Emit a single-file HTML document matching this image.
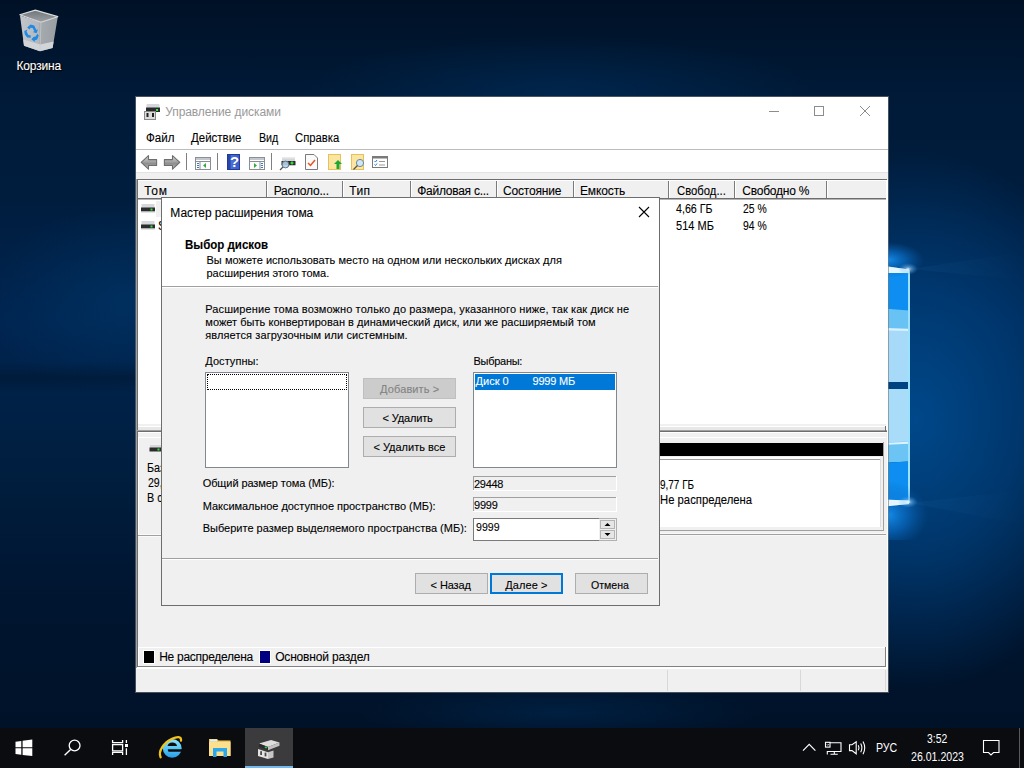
<!DOCTYPE html>
<html><head><meta charset="utf-8"><style>
html,body{margin:0;padding:0;width:1024px;height:768px;overflow:hidden;position:relative;font-family:"Liberation Sans", sans-serif;}
.t{position:absolute;line-height:20px;white-space:pre;-webkit-text-stroke:0.1px currentColor;}
</style></head><body>
<div style="position:absolute;left:0px;top:0px;width:1024px;height:768px;background:linear-gradient(180deg,#001126 0%,#001a38 12.6%,#001d3e 26%,#002450 42%,#001f40 60%,#001530 78%,#001228 95%)"></div>
<div style="position:absolute;left:0px;top:0px;width:1024px;height:768px;background:radial-gradient(ellipse 210px 270px at 915px 420px,rgba(0,72,138,1),rgba(0,60,118,0.8) 50%,rgba(0,50,100,0) 100%)"></div>
<div style="position:absolute;left:0px;top:0px;width:1024px;height:768px;background:radial-gradient(ellipse 150px 95px at 130px 300px,rgba(0,54,104,0.65),rgba(0,54,104,0) 100%)"></div>
<div style="position:absolute;left:0px;top:362px;width:136px;height:32px;background:linear-gradient(180deg,rgba(0,14,30,0) 0%,rgba(0,14,30,0.35) 50%,rgba(0,14,30,0) 100%)"></div>
<div style="position:absolute;left:0px;top:0px;width:1024px;height:768px;background:radial-gradient(ellipse 260px 60px at 560px 95px,rgba(0,48,95,0.55),rgba(0,48,95,0) 100%)"></div>
<div style="position:absolute;left:0px;top:0px;width:1024px;height:768px;background:radial-gradient(ellipse 200px 30px at 560px 712px,rgba(0,42,85,0.55),rgba(0,42,85,0) 100%)"></div>
<svg style="position:absolute;left:870px;top:240px" width="154" height="300">
<defs>
<radialGradient id="fl1" cx="0.5" cy="0.5" r="0.5"><stop offset="0" stop-color="#f4fcff" stop-opacity="0.95"/><stop offset="0.3" stop-color="#a8dcff" stop-opacity="0.5"/><stop offset="1" stop-color="#3aa0f0" stop-opacity="0"/></radialGradient>
<radialGradient id="bg1" cx="0.5" cy="0.5" r="0.5"><stop offset="0" stop-color="#1590f0" stop-opacity="0.95"/><stop offset="0.5" stop-color="#0a78d8" stop-opacity="0.55"/><stop offset="1" stop-color="#0a60b0" stop-opacity="0"/></radialGradient>
<linearGradient id="rayg" x1="0" x2="1"><stop offset="0" stop-color="#5ab4f4" stop-opacity="0.45"/><stop offset="1" stop-color="#5ab4f4" stop-opacity="0"/></linearGradient>
</defs>
<path d="M0 26 L39 31 L39 142 L0 142 Z" fill="#0d8ef0"/>
<path d="M0 67.5 L39 70.5 L39 89 L0 88 Z" fill="#68c2f4"/>
<path d="M0 88 L39 89 L39 142 L0 142 Z" fill="#a6daf8"/>
<path d="M0 87.5 L39 88.8 L39 91 L0 90 Z" fill="#d8f2ff"/>
<path d="M0 149 L39 149 L39 202 L0 204 Z" fill="#a8dcf8"/>
<path d="M0 203 L39 201.5 L39 221.5 L0 223.5 Z" fill="#6cc4f5"/>
<path d="M0 203.5 L39 201.8 L39 203.8 L0 205.5 Z" fill="#dcf4ff"/>
<path d="M0 223.5 L39 221.5 L39 262 L0 266 Z" fill="#0d8ef0"/>
<path d="M0 24 L39 29.5 L39 33 L0 33 Z" fill="#e4f6ff"/>
<path d="M0 259 L39 260.5 L39 264 L0 268 Z" fill="#e4f6ff"/>
<rect x="38" y="30" width="2" height="233" fill="#9be2ff"/>
<ellipse cx="18" cy="20" rx="36" ry="18" fill="url(#bg1)"/>
<ellipse cx="18" cy="275" rx="40" ry="34" fill="url(#bg1)"/>
<path d="M0 24 L39 29.5 L39 33 L0 33 Z" fill="#e4f6ff"/>
<path d="M0 259 L39 260.5 L39 264 L0 268 Z" fill="#e4f6ff"/>
<ellipse cx="38" cy="29" rx="10" ry="6" fill="url(#fl1)"/>
<ellipse cx="38" cy="262" rx="10" ry="6" fill="url(#fl1)"/>
<path d="M40 29 L154 12 L154 40 Z" fill="url(#rayg)" opacity="0.12"/>
<path d="M40 263 L154 250 L154 285 Z" fill="url(#rayg)" opacity="0.12"/>
</svg>
<svg style="position:absolute;left:0;top:0" width="80" height="60">
<defs><linearGradient id="rb" x1="0" x2="1"><stop offset="0" stop-color="#c2c6ca"/><stop offset="0.5" stop-color="#b4b8bc"/><stop offset="0.52" stop-color="#a6abb0"/><stop offset="1" stop-color="#989da2"/></linearGradient>
<linearGradient id="rt" x1="0" y1="0" x2="0" y2="1"><stop offset="0" stop-color="#70757a"/><stop offset="1" stop-color="#9ca1a6"/></linearGradient></defs>
<path d="M20 15.5 L24 45.7 L40 51.3 L52.6 48 L57.8 16.8 L40.9 22.3 Z" fill="url(#rb)"/>
<path d="M23.2 39.5 L40.2 44.5 L53.6 41.5 L52.6 48 L40 51.3 L24 45.7 Z" fill="#d2d5d8"/>
<path d="M19.8 14.8 L35.3 10.1 L57.8 16.65 L40.9 22.3 Z" fill="url(#rt)" stroke="#dadcde" stroke-width="1.1" stroke-linejoin="round"/>
<path d="M40.9 22.8 L40 51" stroke="#c8cbce" stroke-width="0.7"/>
<g fill="#1f8ae6">
<path d="M27.2 27.5 L30.5 24.6 L34.2 25.4 L36.4 30 L38 29.2 L36.6 33.2 L32.8 32 L34.4 31.3 L32.6 28 L30.6 27.8 L29.5 29.5 Z"/>
<path d="M24.2 31 L27.6 29.4 L26.6 31.4 L28.4 35 L30.6 35.2 L30.8 37.8 L27.2 37.6 L24.8 34.6 Z"/>
<path d="M32 37.2 L35.6 36.4 L37.4 33.8 L38.8 35.6 L37.2 39.4 L34.6 40.6 L34.8 42 L31.4 39.2 L33.6 37 Z"/>
</g>
</svg>
<span class="t" style="left:16.50px;top:56px;font-size:12px;color:#fff;letter-spacing:-0.173px;text-shadow:0 0 2px #000,1px 1px 1px #000;">Корзина</span>
<div style="position:absolute;left:136px;top:97px;width:752px;height:595px;background:#fff;box-shadow:0 0 0 1px rgba(120,120,120,0.6)"></div>
<svg style="position:absolute;left:143px;top:102px" width="20" height="20">
<rect x="3.5" y="2" width="13" height="4" rx="1" fill="#d4d6d9"/><rect x="3" y="5.5" width="14" height="4.5" fill="#2a2a2a"/><rect x="13" y="7" width="2" height="2" fill="#37e03a"/>
<rect x="1.5" y="9.5" width="11" height="8" fill="#dcdcdc" stroke="#8a8a8a"/><rect x="3.5" y="11" width="2" height="4" fill="#222"/><rect x="9" y="11" width="2" height="4" fill="#222"/>
</svg>
<span class="t" style="left:165.20px;top:102px;font-size:12px;color:#999;letter-spacing:-0.070px;-webkit-text-stroke:0;">Управление дисками</span>
<div style="position:absolute;left:769px;top:111px;width:10px;height:1px;background:#8c8c8c"></div>
<div style="position:absolute;left:814px;top:106px;width:10px;height:10px;border:1px solid #8c8c8c;box-sizing:border-box"></div>
<svg style="position:absolute;left:859px;top:105px" width="12" height="12"><path d="M1 1 L11 11 M11 1 L1 11" stroke="#8c8c8c" stroke-width="1"/></svg>
<span class="t" style="left:146.30px;top:128px;font-size:12px;color:#000;transform:scaleX(0.9627);transform-origin:0 0;">Файл</span>
<span class="t" style="left:191.30px;top:128px;font-size:12px;color:#000;transform:scaleX(0.9571);transform-origin:0 0;">Действие</span>
<span class="t" style="left:258.80px;top:128px;font-size:12px;color:#000;transform:scaleX(0.8891);transform-origin:0 0;">Вид</span>
<span class="t" style="left:294.80px;top:128px;font-size:12px;color:#000;transform:scaleX(0.9409);transform-origin:0 0;">Справка</span>
<div style="position:absolute;left:136px;top:149px;width:752px;height:1px;background:#bcbcbc"></div>
<div style="position:absolute;left:136px;top:172px;width:752px;height:8px;background:#f0f0f0"></div>
<div style="position:absolute;left:136px;top:172px;width:752px;height:1px;background:#e3e3e3"></div>
<svg style="position:absolute;left:136px;top:150px" width="270" height="22">
<defs>
<linearGradient id="ar" x1="0" y1="0" x2="0" y2="1"><stop offset="0" stop-color="#d8d8d8"/><stop offset="0.45" stop-color="#a4a4a4"/><stop offset="0.6" stop-color="#8c8c8c"/><stop offset="1" stop-color="#c4c4c4"/></linearGradient>
<linearGradient id="hb" x1="0" x2="1"><stop offset="0" stop-color="#2340a8"/><stop offset="0.3" stop-color="#4a6fd8"/><stop offset="1" stop-color="#3b5cc8"/></linearGradient>
</defs>
<path d="M5.2 12.3 L12.5 5.6 L12.5 9.6 L20.6 9.6 L20.6 15.5 L12.5 15.5 L12.5 19.2 Z" fill="url(#ar)" stroke="#6e6e6e" stroke-width="1.1" stroke-linejoin="round"/>
<path d="M43.8 12.3 L36.5 5.6 L36.5 9.6 L28.4 9.6 L28.4 15.5 L36.5 15.5 L36.5 19.2 Z" fill="url(#ar)" stroke="#6e6e6e" stroke-width="1.1" stroke-linejoin="round"/>
<rect x="50" y="3" width="1" height="17" fill="#808080"/>
<g transform="translate(59,7)"><rect x="0.5" y="0.5" width="15" height="12" fill="#fff" stroke="#8a8f96"/><rect x="1" y="1" width="14" height="2" fill="#c4c8ce"/><rect x="1" y="4" width="14" height="1" fill="#8a8f96"/><rect x="4.5" y="5" width="1" height="8" fill="#8a8f96"/><rect x="2" y="6" width="2" height="1" fill="#3a78c8"/><rect x="2" y="8" width="2" height="1" fill="#3a78c8"/><rect x="2" y="10" width="2" height="1" fill="#3a78c8"/><path d="M8 8.5 L11 6 L11 11 Z" fill="#2fae3a"/></g>
<rect x="81" y="3" width="1" height="17" fill="#808080"/>
<rect x="91.5" y="4.5" width="12" height="15" fill="url(#hb)" stroke="#1f3a9a" stroke-width="1"/><rect x="92" y="5" width="2.5" height="14" fill="#2a45a8"/>
<text x="99.2" y="17.2" font-family="Liberation Sans" font-size="15" font-weight="bold" fill="#1a2a70" text-anchor="middle" opacity="0.6">?</text>
<text x="98.7" y="16.8" font-family="Liberation Sans" font-size="15" font-weight="bold" fill="#fff" text-anchor="middle">?</text>
<g transform="translate(113,7)"><rect x="0.5" y="0.5" width="15" height="12" fill="#fff" stroke="#8a8f96"/><rect x="1" y="1" width="14" height="2" fill="#c4c8ce"/><rect x="1" y="4" width="14" height="1" fill="#8a8f96"/><rect x="10.5" y="5" width="1" height="8" fill="#8a8f96"/><rect x="12" y="6" width="2" height="1" fill="#3a78c8"/><rect x="12" y="8" width="2" height="1" fill="#3a78c8"/><rect x="12" y="10" width="2" height="1" fill="#3a78c8"/><path d="M5 6 L8 8.5 L5 11 Z" fill="#2fae3a"/></g>
<rect x="135" y="3" width="1" height="17" fill="#808080"/>
<g transform="translate(144,7)"><rect x="2" y="0" width="13" height="4" fill="#d4d6d8"/><rect x="2" y="0" width="13" height="1.5" fill="#e8eaec"/><rect x="1.5" y="4" width="14" height="4" fill="#2c2c2c"/><rect x="1.5" y="8" width="14" height="1" fill="#c4c6c8"/><rect x="10.5" y="5.2" width="3" height="1.6" fill="#30e040"/><rect x="11.2" y="4.5" width="1.6" height="3" fill="#30e040"/><circle cx="5.5" cy="7.5" r="3.4" fill="#b4d4ec" fill-opacity="0.9" stroke="#5a6a7a" stroke-width="0.9"/><path d="M3 10 L0 13" stroke="#555" stroke-width="1.3"/></g>
<g transform="translate(169,4)"><path d="M0.5 0.5 L9 0.5 L12.5 4 L12.5 15.5 L0.5 15.5 Z" fill="#fafafa" stroke="#7a7a7a"/><path d="M3 9 L5.5 11.5 L10 6" fill="none" stroke="#e8531e" stroke-width="1.5"/></g>
<g transform="translate(192,4)"><rect x="0.5" y="0.5" width="12" height="15" fill="#fbe5a0" stroke="#e3c25a"/><path d="M10 6 L14 10 L11.5 10 L11.5 15 L8.5 15 L8.5 10 L6 10 Z" fill="#1ea832"/></g>
<g transform="translate(215,4)"><rect x="0.5" y="0.5" width="12" height="15" fill="#fbe5a0" stroke="#e3c25a"/><circle cx="9" cy="9" r="3.6" fill="#cfe6f5" stroke="#6a8aa0"/><path d="M6.5 11.5 L2.5 15.5" stroke="#555" stroke-width="1.3"/></g>
<g transform="translate(236,6)"><rect x="0.5" y="0.5" width="15" height="11" fill="#fff" stroke="#7a7a7a" stroke-width="1"/><rect x="1" y="1" width="14" height="1.5" fill="#7a7a7a"/><path d="M2.5 5 L3.5 6 L5 4" stroke="#2a7ad8" fill="none"/><path d="M2.5 8.5 L3.5 9.5 L5 7.5" stroke="#2a7ad8" fill="none"/><rect x="7" y="5" width="6" height="1" fill="#999"/><rect x="7" y="8.5" width="6" height="1" fill="#999"/></g>
</svg>
<div style="position:absolute;left:136px;top:179px;width:751px;height:252px;background:#fff"></div>
<div style="position:absolute;left:136px;top:179px;width:751px;height:1px;background:#6d6d6d"></div>
<div style="position:absolute;left:136px;top:179px;width:1px;height:252px;background:#a0a0a0"></div>
<div style="position:absolute;left:137px;top:179px;width:1px;height:252px;background:#6d6d6d"></div>
<div style="position:absolute;left:138px;top:180px;width:748px;height:19px;background:#f0f0f0"></div>
<div style="position:absolute;left:138px;top:180px;width:748px;height:1px;background:#fff"></div>
<div style="position:absolute;left:138px;top:198px;width:748px;height:1px;background:#6d6d6d"></div>
<div style="position:absolute;left:138px;top:199px;width:748px;height:1px;background:#b4b4b4"></div>
<div style="position:absolute;left:266px;top:181px;width:1px;height:17px;background:#7a7a7a"></div>
<div style="position:absolute;left:267px;top:181px;width:1px;height:17px;background:#fff"></div>
<div style="position:absolute;left:342px;top:181px;width:1px;height:17px;background:#7a7a7a"></div>
<div style="position:absolute;left:343px;top:181px;width:1px;height:17px;background:#fff"></div>
<div style="position:absolute;left:410px;top:181px;width:1px;height:17px;background:#7a7a7a"></div>
<div style="position:absolute;left:411px;top:181px;width:1px;height:17px;background:#fff"></div>
<div style="position:absolute;left:496px;top:181px;width:1px;height:17px;background:#7a7a7a"></div>
<div style="position:absolute;left:497px;top:181px;width:1px;height:17px;background:#fff"></div>
<div style="position:absolute;left:573px;top:181px;width:1px;height:17px;background:#7a7a7a"></div>
<div style="position:absolute;left:574px;top:181px;width:1px;height:17px;background:#fff"></div>
<div style="position:absolute;left:668px;top:181px;width:1px;height:17px;background:#7a7a7a"></div>
<div style="position:absolute;left:669px;top:181px;width:1px;height:17px;background:#fff"></div>
<div style="position:absolute;left:734px;top:181px;width:1px;height:17px;background:#7a7a7a"></div>
<div style="position:absolute;left:735px;top:181px;width:1px;height:17px;background:#fff"></div>
<div style="position:absolute;left:826px;top:181px;width:1px;height:17px;background:#7a7a7a"></div>
<div style="position:absolute;left:827px;top:181px;width:1px;height:17px;background:#fff"></div>
<span class="t" style="left:144.20px;top:181px;font-size:12px;color:#000;letter-spacing:0.717px;">Том</span>
<span class="t" style="left:273.70px;top:181px;font-size:12px;color:#000;letter-spacing:-0.185px;">Располо...</span>
<span class="t" style="left:349.30px;top:181px;font-size:12px;color:#000;letter-spacing:0.347px;">Тип</span>
<span class="t" style="left:417.20px;top:181px;font-size:12px;color:#000;letter-spacing:-0.260px;">Файловая с...</span>
<span class="t" style="left:503.00px;top:181px;font-size:12px;color:#000;letter-spacing:-0.188px;">Состояние</span>
<span class="t" style="left:580.00px;top:181px;font-size:12px;color:#000;letter-spacing:-0.135px;">Емкость</span>
<span class="t" style="left:676.70px;top:181px;font-size:12px;color:#000;transform:scaleX(0.9411);transform-origin:0 0;">Свобод...</span>
<span class="t" style="left:742.20px;top:181px;font-size:12px;color:#000;letter-spacing:-0.211px;">Свободно %</span>
<div style="position:absolute;left:156px;top:201px;width:110px;height:16px;background:#f0f0f0"></div>
<svg style="position:absolute;left:140px;top:204px" width="16" height="10"><rect x="1.5" y="0" width="13" height="4" fill="#d5d7da"/><rect x="1" y="3.5" width="14" height="4" fill="#2c2c2c"/><rect x="1" y="7.5" width="14" height="1" fill="#c8cacc"/><rect x="10.5" y="4.5" width="2" height="2" fill="#30e040"/></svg>
<svg style="position:absolute;left:140px;top:221px" width="16" height="10"><rect x="1.5" y="0" width="13" height="4" fill="#d5d7da"/><rect x="1" y="3.5" width="14" height="4" fill="#2c2c2c"/><rect x="1" y="7.5" width="14" height="1" fill="#c8cacc"/><rect x="10.5" y="4.5" width="2" height="2" fill="#30e040"/></svg>
<span class="t" style="left:158.10px;top:216px;font-size:12px;color:#000;">S</span>
<span class="t" style="left:676.20px;top:199px;font-size:12px;color:#000;transform:scaleX(0.8886);transform-origin:0 0;">4,66 ГБ</span>
<span class="t" style="left:742.60px;top:199px;font-size:12px;color:#000;transform:scaleX(0.8670);transform-origin:0 0;">25 %</span>
<span class="t" style="left:676.20px;top:216px;font-size:12px;color:#000;transform:scaleX(0.9189);transform-origin:0 0;">514 МБ</span>
<span class="t" style="left:742.60px;top:216px;font-size:12px;color:#000;transform:scaleX(0.8670);transform-origin:0 0;">94 %</span>
<div style="position:absolute;left:138px;top:424px;width:748px;height:6px;background:#e8e8e8"></div>
<div style="position:absolute;left:138px;top:424px;width:748px;height:1px;background:#f0f0f0"></div>
<div style="position:absolute;left:138px;top:425px;width:748px;height:1px;background:#f0f0f0"></div>
<div style="position:absolute;left:138px;top:426px;width:748px;height:1px;background:#fff"></div>
<div style="position:absolute;left:136px;top:430px;width:751px;height:1px;background:#a0a0a0"></div>
<div style="position:absolute;left:137px;top:431px;width:750px;height:1px;background:#6d6d6d"></div>
<div style="position:absolute;left:885px;top:426px;width:1px;height:5px;background:#6d6d6d"></div>
<div style="position:absolute;left:138px;top:432px;width:749px;height:215px;background:#f0f0f0"></div>
<div style="position:absolute;left:136px;top:430px;width:1px;height:238px;background:#a0a0a0"></div>
<div style="position:absolute;left:137px;top:431px;width:1px;height:236px;background:#6d6d6d"></div>
<div style="position:absolute;left:138px;top:432px;width:748px;height:1px;background:#fff"></div>
<div style="position:absolute;left:138px;top:437px;width:748px;height:1px;background:#fff"></div>
<svg style="position:absolute;left:148px;top:444px" width="16" height="12"><rect x="2" y="1" width="12" height="3" fill="#d5d7da"/><rect x="1.5" y="3.5" width="13" height="4" fill="#2c2c2c"/><rect x="9.5" y="4.5" width="2" height="2" fill="#30e040"/></svg>
<span class="t" style="left:147.20px;top:458px;font-size:12px;color:#000;transform:scaleX(0.9000);transform-origin:0 0;">Базовый</span>
<span class="t" style="left:147.50px;top:473px;font-size:12px;color:#000;transform:scaleX(0.8800);transform-origin:0 0;">29,76 ГБ</span>
<span class="t" style="left:147.20px;top:488px;font-size:12px;color:#000;transform:scaleX(0.9000);transform-origin:0 0;">В сети</span>
<div style="position:absolute;left:600px;top:442px;width:284px;height:89px;background:#f0f0f0"></div>
<div style="position:absolute;left:883px;top:442px;width:1px;height:89px;background:#a0a0a0"></div>
<div style="position:absolute;left:600px;top:530px;width:284px;height:1px;background:#a0a0a0"></div>
<div style="position:absolute;left:600px;top:443px;width:283px;height:13px;background:#000"></div>
<div style="position:absolute;left:600px;top:457px;width:280px;height:70px;background:#fff"></div>
<div style="position:absolute;left:600px;top:459px;width:280px;height:1px;background:#a0a0a0"></div>
<div style="position:absolute;left:880px;top:459px;width:1px;height:68px;background:#dcdcdc"></div>
<span class="t" style="left:660.00px;top:475px;font-size:12px;color:#000;transform:scaleX(0.8303);transform-origin:0 0;">9,77 ГБ</span>
<span class="t" style="left:660.00px;top:490px;font-size:12px;color:#000;transform:scaleX(0.9411);transform-origin:0 0;">Не распределена</span>
<div style="position:absolute;left:138px;top:534px;width:23px;height:1px;background:#fafafa"></div>
<div style="position:absolute;left:138px;top:535px;width:23px;height:1px;background:#a0a0a0"></div>
<div style="position:absolute;left:138px;top:536px;width:23px;height:1px;background:#fafafa"></div>
<div style="position:absolute;left:138px;top:437px;width:1px;height:98px;background:#fff"></div>
<div style="position:absolute;left:600px;top:533px;width:286px;height:1px;background:#f8f8f8"></div>
<div style="position:absolute;left:600px;top:534px;width:286px;height:1px;background:#a0a0a0"></div>
<div style="position:absolute;left:600px;top:535px;width:286px;height:1px;background:#f8f8f8"></div>
<div style="position:absolute;left:138px;top:648px;width:748px;height:19px;background:#f0f0f0"></div>
<div style="position:absolute;left:138px;top:647px;width:748px;height:1px;background:#fff"></div>
<div style="position:absolute;left:138px;top:666px;width:748px;height:1px;background:#808080"></div>
<div style="position:absolute;left:138px;top:647px;width:1px;height:19px;background:#fff"></div>
<div style="position:absolute;left:885px;top:647px;width:1px;height:20px;background:#808080"></div>
<div style="position:absolute;left:143px;top:650px;width:12px;height:14px;background:#fff"></div>
<div style="position:absolute;left:144px;top:651px;width:10px;height:12px;background:#000"></div>
<div style="position:absolute;left:259px;top:650px;width:12px;height:14px;background:#fff"></div>
<div style="position:absolute;left:260px;top:651px;width:10px;height:12px;background:#000080"></div>
<span class="t" style="left:159.20px;top:647px;font-size:12px;color:#000;letter-spacing:-0.270px;">Не распределена</span>
<span class="t" style="left:275.20px;top:647px;font-size:12px;color:#000;letter-spacing:-0.177px;">Основной раздел</span>
<div style="position:absolute;left:136px;top:668px;width:752px;height:24px;background:#f0f0f0"></div>
<div style="position:absolute;left:136px;top:668px;width:752px;height:1px;background:#fff"></div>
<div style="position:absolute;left:667px;top:670px;width:1px;height:21px;background:#d8d8d8"></div>
<div style="position:absolute;left:800px;top:670px;width:1px;height:21px;background:#d8d8d8"></div>
<div style="position:absolute;left:885px;top:670px;width:1px;height:21px;background:#d8d8d8"></div>
<div style="position:absolute;left:161px;top:197px;width:499px;height:409px;background:#f0f0f0;border:1px solid #6d6d6d;box-sizing:border-box"></div>
<div style="position:absolute;left:162px;top:198px;width:497px;height:88px;background:#fff"></div>
<div style="position:absolute;left:162px;top:286px;width:496px;height:1px;background:#a0a0a0"></div>
<div style="position:absolute;left:162px;top:287px;width:496px;height:1px;background:#fff"></div>
<span class="t" style="left:170.30px;top:203px;font-size:12px;color:#000;letter-spacing:-0.049px;">Мастер расширения тома</span>
<svg style="position:absolute;left:638px;top:206px" width="12" height="12"><path d="M1 1 L11 11 M11 1 L1 11" stroke="#000" stroke-width="1.1"/></svg>
<span class="t" style="left:184.90px;top:235px;font-size:12px;color:#000;transform:scaleX(0.9598);transform-origin:0 0;font-weight:bold;">Выбор дисков</span>
<span class="t" style="left:206.50px;top:250px;font-size:11px;color:#000;letter-spacing:0.035px;">Вы можете использовать место на одном или нескольких дисках для</span>
<span class="t" style="left:206.50px;top:263px;font-size:11px;color:#000;letter-spacing:-0.025px;">расширения этого тома.</span>
<span class="t" style="left:205.30px;top:299px;font-size:11px;color:#000;letter-spacing:0.098px;">Расширение тома возможно только до размера, указанного ниже, так как диск не</span>
<span class="t" style="left:205.30px;top:312px;font-size:11px;color:#000;letter-spacing:0.032px;">может быть конвертирован в динамический диск, или же расширяемый том</span>
<span class="t" style="left:205.30px;top:325px;font-size:11px;color:#000;letter-spacing:0.099px;">является загрузочным или системным.</span>
<span class="t" style="left:205.30px;top:351px;font-size:11px;color:#000;letter-spacing:0.051px;">Доступны:</span>
<span class="t" style="left:473.50px;top:351px;font-size:11px;color:#000;letter-spacing:-0.280px;">Выбраны:</span>
<div style="position:absolute;left:205px;top:372px;width:144px;height:96px;background:#fff;border:1px solid #828790;box-sizing:border-box"></div>
<div style="position:absolute;left:207px;top:374px;width:140px;height:16px;border:1px dotted #000;box-sizing:border-box"></div>
<div style="position:absolute;left:473px;top:372px;width:144px;height:96px;background:#fff;border:1px solid #828790;box-sizing:border-box"></div>
<div style="position:absolute;left:475px;top:374px;width:140px;height:16px;background:#0078d7"></div>
<span class="t" style="left:475.60px;top:371px;font-size:11px;color:#fff;">Диск 0</span>
<span class="t" style="left:532.60px;top:371px;font-size:11px;color:#fff;letter-spacing:-0.232px;">9999 МБ</span>
<div style="position:absolute;left:363px;top:378px;width:93px;height:21px;background:#cccccc;border:1px solid #bfbfbf;box-sizing:border-box"></div>
<span class="t" style="left:380.10px;top:379px;font-size:11px;color:#838383;letter-spacing:0.114px;">Добавить ></span>
<div style="position:absolute;left:363px;top:407px;width:93px;height:21px;background:#e1e1e1;border:1px solid #adadad;box-sizing:border-box"></div>
<span class="t" style="left:382.50px;top:408px;font-size:11px;color:#000;letter-spacing:-0.143px;">< Удалить</span>
<div style="position:absolute;left:363px;top:436px;width:93px;height:21px;background:#e1e1e1;border:1px solid #adadad;box-sizing:border-box"></div>
<span class="t" style="left:373.40px;top:437px;font-size:11px;color:#000;letter-spacing:0.012px;">< Удалить все</span>
<span class="t" style="left:202.70px;top:473px;font-size:11px;color:#000;letter-spacing:-0.088px;">Общий размер тома (МБ):</span>
<span class="t" style="left:202.70px;top:496px;font-size:11px;color:#000;letter-spacing:-0.037px;">Максимальное доступное пространство (МБ):</span>
<span class="t" style="left:202.70px;top:518px;font-size:11px;color:#000;">Выберите размер выделяемого пространства (МБ):</span>
<div style="position:absolute;left:473px;top:476px;width:144px;height:15px;background:#f0f0f0"></div>
<div style="position:absolute;left:473px;top:476px;width:143px;height:1px;background:#a0a0a0"></div>
<div style="position:absolute;left:473px;top:476px;width:1px;height:15px;background:#a0a0a0"></div>
<div style="position:absolute;left:473px;top:490px;width:144px;height:1px;background:#fff"></div>
<div style="position:absolute;left:616px;top:476px;width:1px;height:15px;background:#fff"></div>
<span class="t" style="left:474.00px;top:474px;font-size:11px;color:#000;letter-spacing:-0.293px;">29448</span>
<div style="position:absolute;left:473px;top:497px;width:144px;height:15px;background:#f0f0f0"></div>
<div style="position:absolute;left:473px;top:497px;width:143px;height:1px;background:#a0a0a0"></div>
<div style="position:absolute;left:473px;top:497px;width:1px;height:15px;background:#a0a0a0"></div>
<div style="position:absolute;left:473px;top:511px;width:144px;height:1px;background:#fff"></div>
<div style="position:absolute;left:616px;top:497px;width:1px;height:15px;background:#fff"></div>
<span class="t" style="left:474.00px;top:495px;font-size:11px;color:#000;letter-spacing:-0.184px;">9999</span>
<div style="position:absolute;left:473px;top:518px;width:144px;height:23px;background:#fff"></div>
<div style="position:absolute;left:473px;top:518px;width:126px;height:1px;background:#7a7a7a"></div>
<div style="position:absolute;left:473px;top:540px;width:126px;height:1px;background:#7a7a7a"></div>
<div style="position:absolute;left:473px;top:518px;width:1px;height:23px;background:#7a7a7a"></div>
<div style="position:absolute;left:599px;top:518px;width:18px;height:23px;background:#f0f0f0;border:1px solid #adb1b6;border-left:none;box-sizing:border-box"></div>
<div style="position:absolute;left:600px;top:520px;width:15px;height:9px;background:#e6e6e6;border:1px solid #b4b4b4;box-sizing:border-box"></div>
<div style="position:absolute;left:600px;top:530px;width:15px;height:9px;background:#e6e6e6;border:1px solid #b4b4b4;box-sizing:border-box"></div>
<svg style="position:absolute;left:600px;top:520px" width="15" height="20"><path d="M4.5 6 L7.5 3 L10.5 6 Z" fill="#000"/><path d="M4.5 13 L7.5 16 L10.5 13 Z" fill="#000"/></svg>
<span class="t" style="left:476.20px;top:517px;font-size:11px;color:#000;transform:scaleX(0.9609);transform-origin:0 0;">9999</span>
<div style="position:absolute;left:162px;top:558px;width:496px;height:1px;background:#a0a0a0"></div>
<div style="position:absolute;left:162px;top:559px;width:496px;height:1px;background:#fff"></div>
<div style="position:absolute;left:415px;top:573px;width:73px;height:21px;background:#e1e1e1;border:1px solid #adadad;box-sizing:border-box"></div>
<span class="t" style="left:430.60px;top:575px;font-size:11px;color:#000;letter-spacing:-0.097px;">< Назад</span>
<div style="position:absolute;left:490px;top:573px;width:73px;height:21px;background:#e1e1e1;border:2px solid #0078d7;box-sizing:border-box"></div>
<span class="t" style="left:505.30px;top:575px;font-size:11px;color:#000;letter-spacing:0.087px;">Далее ></span>
<div style="position:absolute;left:575px;top:573px;width:73px;height:21px;background:#e1e1e1;border:1px solid #adadad;box-sizing:border-box"></div>
<span class="t" style="left:591.40px;top:575px;font-size:11px;color:#000;transform:scaleX(0.9616);transform-origin:0 0;">Отмена</span>
<div style="position:absolute;left:0px;top:728px;width:1024px;height:40px;background:#0b0c10"></div>
<svg style="position:absolute;left:0;top:728px" width="300" height="40">
<path d="M15.5 13.7 L21.3 13 L21.3 19.3 L15.5 19.3 Z M22.6 12.8 L32.3 11.6 L32.3 19.3 L22.6 19.3 Z M15.5 20.3 L21.3 20.3 L21.3 26.7 L15.5 26 Z M22.6 20.3 L32.3 20.3 L32.3 28 L22.6 26.9 Z" fill="#fff"/>
<circle cx="74.6" cy="17.5" r="5.4" fill="none" stroke="#fff" stroke-width="1.3"/>
<path d="M70.6 21.5 L64.6 27.3" stroke="#fff" stroke-width="1.4"/>
<g fill="none" stroke="#fff" stroke-width="1.3"><path d="M112.6 12 V14.6 H122.6 V12 M112.6 27 V24.4 H122.6 V27"/><rect x="112.6" y="16.6" width="10" height="6.3"/><path d="M126.4 12 V15 M126.4 20.2 V27"/></g>
<rect x="125" y="16" width="3" height="3" fill="#fff"/>
</svg>
<svg style="position:absolute;left:155px;top:732px" width="32" height="32">
<defs><linearGradient id="ieg" x1="0" y1="0" x2="0" y2="1"><stop offset="0" stop-color="#8fe4ff"/><stop offset="0.6" stop-color="#4cc0f4"/><stop offset="1" stop-color="#2a9ce8"/></linearGradient></defs>
<circle cx="17.2" cy="16.3" r="9.4" fill="url(#ieg)"/>
<path d="M12.6 13.9 A4.7 3.5 0 0 1 22 13.9 Z" fill="#0d0d10"/>
<path d="M12.8 17.2 L27 17.2 L27 19.8 L13.6 19.8 Q12.6 18.6 12.8 17.2 Z" fill="#0d0d10"/>
<path d="M5.6 25.2 C2.8 19 9 10.5 17 6.8 C22 4.4 26.5 4 26 8.6" fill="none" stroke="#f2c21a" stroke-width="2.3" stroke-linecap="round"/>
</svg>
<svg style="position:absolute;left:207px;top:737px" width="26" height="22">
<path d="M2 2 L10 2 L11.5 3.5 L23.5 3.5 L23.5 19 L2 19 Z" fill="#f0c85a"/>
<rect x="2" y="5" width="21.5" height="14" fill="#fde08e"/>
<rect x="3" y="2.5" width="7" height="2" fill="#dff0ff"/>
<path d="M6 20 L6 11 L20 11 L20 20 L16.5 20 L16.5 14.5 L9.5 14.5 L9.5 20 Z" fill="#29a8f0"/>
</svg>
<div style="position:absolute;left:245px;top:728px;width:48px;height:40px;background:#3b3b3d"></div>
<div style="position:absolute;left:245px;top:766px;width:48px;height:2px;background:#76b9ed"></div>
<svg style="position:absolute;left:252px;top:734px" width="34" height="30">
<path d="M7 9.5 L19 6 L27.5 8.5 L16 13 Z" fill="#dedede"/>
<path d="M16 13 L27.5 8.5 L27.5 11.8 L16 16.3 Z" fill="#c2c2c2"/>
<path d="M7 9.5 L16 13 L16 16.3 L7 12.8 Z" fill="#2c2c2c"/>
<rect x="12.8" y="12.6" width="2.4" height="1.6" fill="#30d040"/>
<path d="M6 15 L16 18.2 L16 25 L6 22 Z" fill="#e4e4e4"/>
<path d="M16 18.2 L21.5 16.6 L21.5 23.5 L16 25 Z" fill="#c6c6c6"/>
<rect x="8.2" y="17.2" width="1.8" height="3.8" fill="#4a4a4a"/><rect x="12.6" y="18.6" width="1.8" height="3.8" fill="#4a4a4a"/>
</svg>
<svg style="position:absolute;left:795px;top:728px" width="229" height="40">
<path d="M8 22.6 L14.2 16.4 L20.4 22.6" fill="none" stroke="#fff" stroke-width="1.2"/>
<g fill="none" stroke="#fff" stroke-width="1.1"><path d="M32.3 14.8 H46 V23.5 H32.3 V26.5"/><path d="M39.3 23.5 V26 M35.5 26.3 H42.8"/></g>
<rect x="30.5" y="14.3" width="4.5" height="4.8" fill="#0b0c10" stroke="#fff" stroke-width="1.1"/><path d="M31.8 16.2 L32.8 17.3 L33.8 16.2" stroke="#fff" stroke-width="0.8" fill="none"/>
<g fill="none" stroke="#fff" stroke-width="1.1"><path d="M54.5 16.8 H57 L61.2 13.8 V25.8 L57 22.6 H54.5 Z"/><path d="M63.3 17.3 Q64.6 19.8 63.3 22.3"/><path d="M65.7 15.5 Q68 19.8 65.7 24.2"/><path d="M68 13.5 Q71.4 19.8 68 26.2"/></g>
<path d="M188.5 12.5 H204 V24.5 H198.5 L196 27 L193.5 24.5 H188.5 Z" fill="none" stroke="#fff" stroke-width="1.1"/>
<rect x="224" y="0" width="1" height="40" fill="#5a5a5a"/>
</svg>
<span class="t" style="left:876.30px;top:738px;font-size:12px;color:#fff;transform:scaleX(0.8825);transform-origin:0 0;-webkit-text-stroke:0;">РУС</span>
<span class="t" style="left:927.10px;top:729px;font-size:12px;color:#fff;transform:scaleX(0.8656);transform-origin:0 0;-webkit-text-stroke:0;">3:52</span>
<span class="t" style="left:911.00px;top:747px;font-size:12px;color:#fff;transform:scaleX(0.8810);transform-origin:0 0;-webkit-text-stroke:0;">26.01.2023</span>
</body></html>
